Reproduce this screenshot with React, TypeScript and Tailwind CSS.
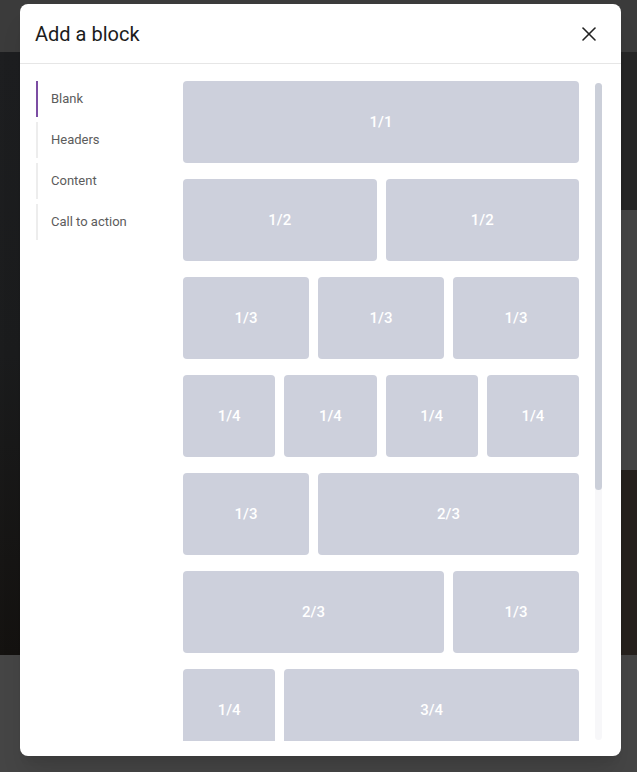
import { X } from "lucide-react";

// Layout presets, expressed as 12-column spans
const PRESETS: { spans: number[]; labels: string[] }[] = [
  { spans: [12], labels: ["1/1"] },
  { spans: [6, 6], labels: ["1/2", "1/2"] },
  { spans: [4, 4, 4], labels: ["1/3", "1/3", "1/3"] },
  { spans: [3, 3, 3, 3], labels: ["1/4", "1/4", "1/4", "1/4"] },
  { spans: [4, 8], labels: ["1/3", "2/3"] },
  { spans: [8, 4], labels: ["2/3", "1/3"] },
  { spans: [3, 9], labels: ["1/4", "3/4"] },
];

const SPAN: Record<number, string> = {
  3: "col-span-3",
  4: "col-span-4",
  6: "col-span-6",
  8: "col-span-8",
  9: "col-span-9",
  12: "col-span-12",
};

const CATEGORIES = ["Blank", "Headers", "Content", "Call to action"];

function Backdrop() {
  return (
    <div className="flex h-[772px] flex-col">
      <div className="h-[52px] bg-[#3b3b3b]" />
      <div className="flex h-[603px]">
        <div className="flex-1 bg-gradient-to-b from-[#1d1e20] via-[#1b1c1d] to-[#141210]" />
        <div className="flex w-[200px] flex-col">
          <div className="h-[158px] bg-[#262626]" />
          <div className="h-[260px] bg-[#444444]" />
          <div className="flex-1 bg-[#26211d]" />
        </div>
      </div>
      <div className="flex-1 bg-[#454545]" />
    </div>
  );
}

export default function App() {
  return (
    <div className="relative h-[772px] w-[637px] overflow-hidden font-['Roboto',sans-serif]">
      <Backdrop />

      {/* Modal */}
      <div className="absolute inset-0 flex items-start pl-[20px] pt-[4px]">
        <div className="flex h-[752px] w-[601px] flex-col rounded-lg bg-white shadow-xl">
          <div className="flex h-[60px] shrink-0 items-center justify-between border-b border-[#e6e6e6] pl-[15px] pr-[20px]">
            <h2 className="text-[20px] font-normal text-[#1c1c1c]">Add a block</h2>
            <X size={24} strokeWidth={1.6} className="text-[#222]" />
          </div>

          <div className="flex pl-[16px] pt-[17px]">
            {/* Category list */}
            <ul className="w-[147px] shrink-0">
              {CATEGORIES.map((c, i) => (
                <li
                  key={c}
                  className={`mb-[5px] flex h-9 items-center border-l-2 pl-[13px] text-[13px] text-[#5c5c5c] ${
                    i === 0 ? "border-[#7c4da3]" : "border-[#ededed]"
                  }`}
                >
                  {c}
                </li>
              ))}
            </ul>

            {/* Preset grid */}
            <div className="h-[660px] w-[396px] overflow-hidden">
              <div className="grid auto-rows-[82px] grid-cols-12 gap-x-[9px] gap-y-[16px]">
                {PRESETS.flatMap((p, r) =>
                  p.spans.map((s, i) => (
                    <div
                      key={`${r}-${i}`}
                      className={`${SPAN[s]} flex items-center justify-center rounded bg-[#cdd0dc] text-[15px] font-medium text-white`}
                    >
                      {p.labels[i]}
                    </div>
                  ))
                )}
              </div>
            </div>

            {/* Scrollbar */}
            <div className="ml-[16px] mt-[2px] h-[657px] w-[7px] rounded-full bg-[#f7f7f9]">
              <div className="h-[407px] w-[7px] rounded-full bg-[#cbcfd9]" />
            </div>
          </div>
        </div>
      </div>
    </div>
  );
}
